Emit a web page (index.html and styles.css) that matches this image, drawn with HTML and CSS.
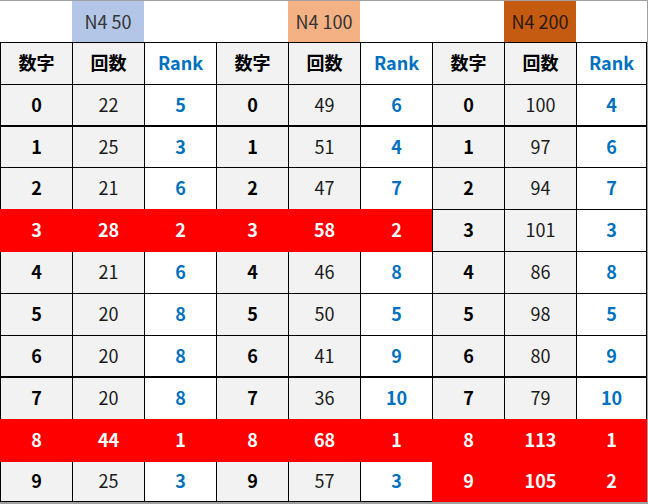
FILE: index.html
```html
<!DOCTYPE html>
<html lang="ja">
<head>
<meta charset="utf-8">
<link rel="stylesheet" href="styles.css">
</head>
<body>
<div class="frame">
<div class="sheet">
  <div class="cap"></div><div class="cap c50">N4 50</div><div class="cap"></div>
  <div class="cap"></div><div class="cap c100">N4 100</div><div class="cap"></div>
  <div class="cap"></div><div class="cap c200">N4 200</div><div class="cap"></div>

  <div class="c g b">数字</div><div class="c g b">回数</div><div class="c r">Rank</div>
  <div class="c g b">数字</div><div class="c g b">回数</div><div class="c r">Rank</div>
  <div class="c g b">数字</div><div class="c g b">回数</div><div class="c r last">Rank</div>

  <div class="c g b">0</div><div class="c g n">22</div><div class="c r">5</div>
  <div class="c g b">0</div><div class="c g n">49</div><div class="c r">6</div>
  <div class="c g b">0</div><div class="c g n">100</div><div class="c r last">4</div>

  <div class="c g b">1</div><div class="c g n">25</div><div class="c r">3</div>
  <div class="c g b">1</div><div class="c g n">51</div><div class="c r">4</div>
  <div class="c g b">1</div><div class="c g n">97</div><div class="c r last">6</div>

  <div class="c g b">2</div><div class="c g n">21</div><div class="c r">6</div>
  <div class="c g b">2</div><div class="c g n">47</div><div class="c r">7</div>
  <div class="c g b">2</div><div class="c g n">94</div><div class="c r last">7</div>

  <div class="c hit">3</div><div class="c hit">28</div><div class="c hit">2</div>
  <div class="c hit">3</div><div class="c hit">58</div><div class="c hit">2</div>
  <div class="c g b">3</div><div class="c g n">101</div><div class="c r last">3</div>

  <div class="c g b under">4</div><div class="c g n under">21</div><div class="c r under">6</div>
  <div class="c g b under">4</div><div class="c g n under">46</div><div class="c r under">8</div>
  <div class="c g b">4</div><div class="c g n">86</div><div class="c r last">8</div>

  <div class="c g b">5</div><div class="c g n">20</div><div class="c r">8</div>
  <div class="c g b">5</div><div class="c g n">50</div><div class="c r">5</div>
  <div class="c g b">5</div><div class="c g n">98</div><div class="c r last">5</div>

  <div class="c g b">6</div><div class="c g n">20</div><div class="c r">8</div>
  <div class="c g b">6</div><div class="c g n">41</div><div class="c r">9</div>
  <div class="c g b">6</div><div class="c g n">80</div><div class="c r last">9</div>

  <div class="c g b">7</div><div class="c g n">20</div><div class="c r">8</div>
  <div class="c g b">7</div><div class="c g n">36</div><div class="c r">10</div>
  <div class="c g b">7</div><div class="c g n">79</div><div class="c r last">10</div>

  <div class="c hit">8</div><div class="c hit">44</div><div class="c hit">1</div>
  <div class="c hit">8</div><div class="c hit">68</div><div class="c hit">1</div>
  <div class="c hit">8</div><div class="c hit">113</div><div class="c hit last">1</div>

  <div class="c g b under end">9</div><div class="c g n under end">25</div><div class="c r under end">3</div>
  <div class="c g b under end">9</div><div class="c g n under end">57</div><div class="c r under end">3</div>
  <div class="c hit end">9</div><div class="c hit end">105</div><div class="c hit last end">2</div>
</div>
</div>
</body>
</html>
```

FILE: styles.css
```css
html, body {
  margin: 0;
  padding: 0;
  background: #ffffff;
}

.frame {
  width: 648px;
  height: 504px;
  box-sizing: border-box;
  border-top: 1px solid #a0a0a0;
  border-right: 1px solid #a0a0a0;
  border-bottom: 2px solid #a0a0a0;
  overflow: hidden;
}

.sheet {
  display: grid;
  grid-template-columns: repeat(8, 72px) 71px;
  grid-template-rows: 41px 42px 41px 42px 42px 42px 42px 42px 41px 43px 42px 41px;
  font-family: "Noto Sans CJK JP", "Liberation Sans", sans-serif;
  font-size: 18px;
  line-height: 1;
}

.cap {
  display: flex;
  align-items: center;
  justify-content: center;
  padding-bottom: 2px;
  font-size: 18px;
  color: #333333;
  font-weight: 400;
}

.c50 { background: #b4c6e7; }
.c100 { background: #f4b183; }
.c200 { background: #c55a11; color: #2a1a0a; }

.c {
  display: flex;
  align-items: center;
  justify-content: center;
  box-sizing: border-box;
  padding-bottom: 3px;
  border-left: 1px solid #000000;
  border-top: 1px solid #000000;
}

.sheet > .c:nth-child(n+28):nth-child(-n+36),
.sheet > .c:nth-child(n+82):nth-child(-n+90) {
  border-top-width: 2px;
}

.g { background: #f2f2f2; }

.b {
  font-weight: 700;
  color: #000000;
}

.n {
  font-weight: 400;
  color: #1a1a1a;
}

.r {
  background: #ffffff;
  color: #0070c0;
  font-weight: 700;
}

.last { border-right: 1px solid #000000; }
.end { border-bottom: 1px solid #000000; }

.under { border-top-color: #ff0000; }

.hit {
  background: #ff0000;
  color: #ffffff;
  font-weight: 700;
  border-left-color: #ff0000;
  border-top-color: #ff0000;
}

.hit.last { border-right-color: #ff0000; }
.hit.end { border-bottom-color: #ff0000; }
```
